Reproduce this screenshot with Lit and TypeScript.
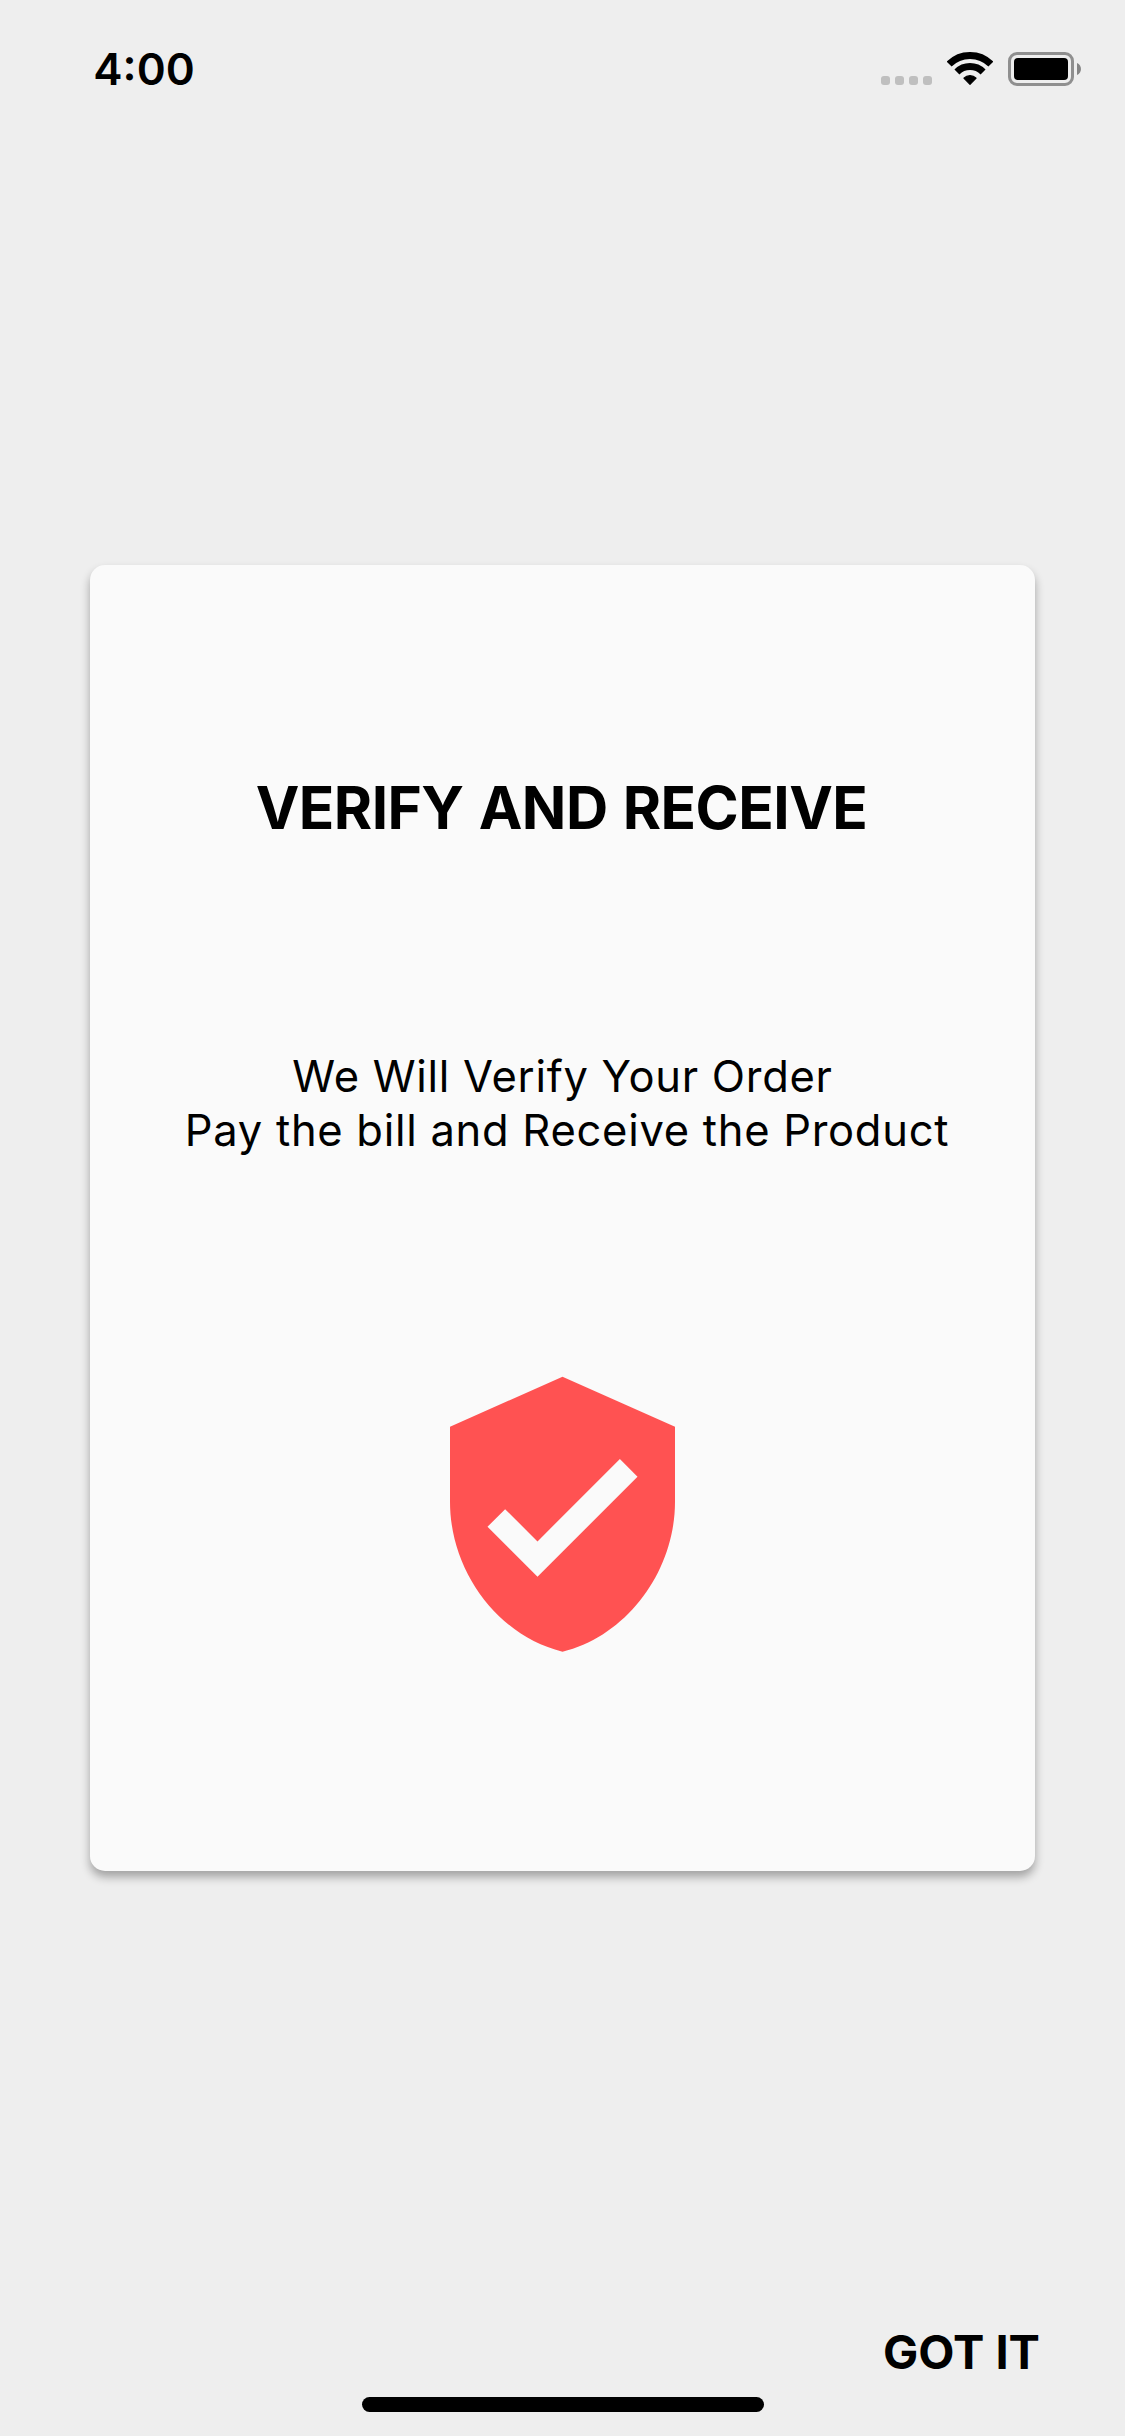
import { LitElement, html, css } from "lit";
import { customElement } from "lit/decorators.js";

@customElement("status-bar")
export class StatusBar extends LitElement {
  static styles = css`
    :host {
      display: flex;
      align-items: flex-start;
      justify-content: space-between;
      height: 96px;
      padding: 42px 43px 0 93.3px;
      box-sizing: border-box;
    }
    .time {
      font-size: 44px;
      font-weight: 600;
      line-height: 54px;
    }
    .icons {
      display: flex;
      align-items: flex-start;
      padding-top: 9px;
    }
    .signal { margin: 25px 15px 0 0; }
    .wifi { margin: 1px 15px 0 0; }
    .battery { margin-top: 1px; }
    svg { display: block; }
  `;

  render() {
    return html`
      <div class="time">4:00</div>
      <div class="icons">
        <svg class="signal" width="51" height="9" viewBox="0 0 51 9" fill="#bfbfbf">
          <rect x="0" width="9" height="9" rx="3" />
          <rect x="14" width="9" height="9" rx="3" />
          <rect x="28" width="9" height="9" rx="3" />
          <rect x="42" width="9" height="9" rx="3" />
        </svg>
        <svg class="wifi" width="46" height="34" viewBox="0 0 46 34">
          <g fill="none" stroke="#000" stroke-width="7">
            <path d="M2.14 12.14A29.5 29.5 0 0 1 43.86 12.14" />
            <path d="M9.92 19.92A18.5 18.5 0 0 1 36.08 19.92" />
          </g>
          <path
            d="M23 32.3L16.9 26.2A8.7 8.7 0 0 1 29.1 26.2Z"
            stroke="#000"
            stroke-width="1.2"
            stroke-linejoin="round"
          />
        </svg>
        <svg class="battery" width="74" height="34" viewBox="0 0 74 34">
          <rect x="1.5" y="1.5" width="63" height="31" rx="7.5" fill="none" stroke="#8f8f8f" stroke-width="3" />
          <rect x="6" y="6" width="54" height="22" rx="4" />
          <path d="M69 11C74.3 13 74.3 21 69 23Z" fill="#858585" />
        </svg>
      </div>
    `;
  }
}

@customElement("info-card")
export class InfoCard extends LitElement {
  static styles = css`
    :host {
      display: flex;
      flex-direction: column;
      align-items: center;
      height: 1306px;
      padding-top: 207px;
      box-sizing: border-box;
      background: #fafafa;
      border-radius: 15px;
      box-shadow: 0 6px 10px rgba(0, 0, 0, 0.32);
    }
    .title {
      margin: 0;
      padding-right: 2px;
      font-size: 58.5px;
      font-weight: 700;
      line-height: 72px;
      letter-spacing: -0.54px;
      word-spacing: 1.8px;
      white-space: nowrap;
    }
    .message {
      margin: 205px 0 207px;
      font-size: 43.5px;
      font-weight: 400;
      line-height: 54px;
      letter-spacing: 0.72px;
      text-align: center;
      white-space: nowrap;
    }
    .second { padding-left: 9px; }
    .shield {
      display: block;
      width: 301px;
      height: 301px;
      fill: #ff5252;
    }
  `;

  render() {
    return html`
      <h1 class="title">VERIFY AND RECEIVE</h1>
      <div class="message">
        <div>We Will Verify Your Order</div>
        <div class="second">Pay the bill and Receive the Product</div>
      </div>
      <svg class="shield" viewBox="-0.04 -0.02 24.08 24.08">
        <path
          d="M12 1L3 5v6c0 5.55 3.84 10.74 9 12 5.16-1.26 9-6.45 9-12V5l-9-4zm-2 16l-4-4 1.41-1.41L10 14.17l6.59-6.59L18 9l-8 8z"
        />
      </svg>
    `;
  }
}

@customElement("app-root")
export class AppRoot extends LitElement {
  static styles = css`
    :host {
      display: flex;
      flex-direction: column;
      width: 1125px;
      height: 2436px;
      overflow: hidden;
      background: #eeeeee;
      color: #000;
      font-family: Inter, "Liberation Sans", sans-serif;
    }
    .card { margin: 469px 90px 0; }
    .footer {
      display: flex;
      justify-content: flex-end;
      margin-top: 451px;
      padding-right: 85px;
    }
    .action {
      padding: 0;
      border: 0;
      background: none;
      color: inherit;
      font-family: inherit;
      font-size: 47px;
      font-weight: 700;
      line-height: 60px;
    }
    .home {
      width: 402px;
      height: 15px;
      margin: 15px 0 0 362px;
      border-radius: 8px;
      background: #000;
    }
  `;

  render() {
    return html`
      <status-bar></status-bar>
      <info-card class="card"></info-card>
      <div class="footer"><button class="action">GOT IT</button></div>
      <div class="home"></div>
    `;
  }
}
